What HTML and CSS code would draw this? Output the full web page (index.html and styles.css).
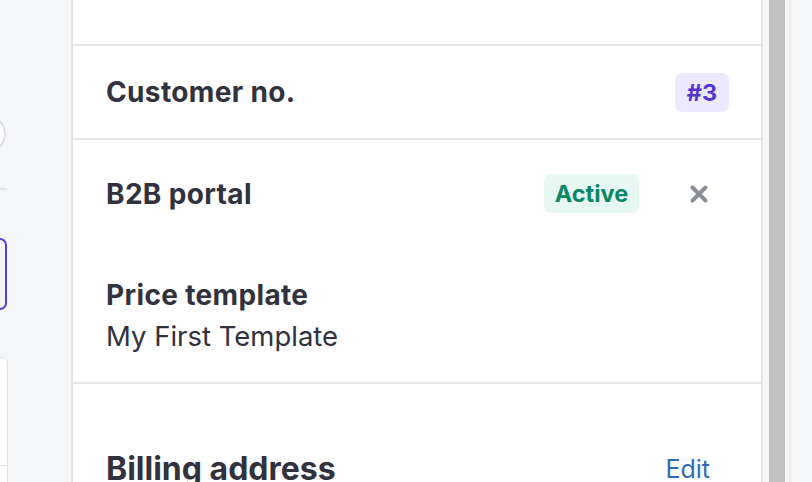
FILE: index.html
```html
<!DOCTYPE html>
<html>
<head>
<meta charset="utf-8">
<link rel="stylesheet" href="styles.css">
</head>
<body>
<div class="page">
  <aside class="side">
    <div class="side-circle"></div>
    <div class="side-line"></div>
    <div class="side-select"></div>
    <div class="side-card"><div class="side-card-line"></div></div>
  </aside>
  <main class="panel">
    <div class="sec sec-top"></div>
    <div class="sec row row-customer">
      <span class="label">Customer no.</span>
      <span class="badge badge-purple">#3</span>
    </div>
    <div class="sec sec-b2b">
      <div class="row row-b2b">
        <span class="label">B2B portal</span>
        <div class="row-end">
          <span class="badge badge-green">Active</span>
          <button class="close" aria-label="Remove">
            <svg width="20" height="20" viewBox="0 0 20 20"><path d="M3.5 3.5L16.5 16.5M16.5 3.5L3.5 16.5" stroke="#8b8d98" stroke-width="4" stroke-linecap="round"/></svg>
          </button>
        </div>
      </div>
      <div class="field">
        <div class="label">Price template</div>
        <div class="value">My First Template</div>
      </div>
    </div>
    <div class="sec sec-billing">
      <div class="row">
        <span class="heading">Billing address</span>
        <a class="link">Edit</a>
      </div>
    </div>
  </main>
  <div class="gutter">
    <div class="thumb"></div>
  </div>
  <div class="rest"></div>
</div>
</body>
</html>
```

FILE: styles.css
```css
* { box-sizing: border-box; }
html, body { margin: 0; padding: 0; }
body {
  font-family: Inter, "Noto Sans", sans-serif;
  color: #32323f;
  background: #f5f6f8;
  width: 812px;
  height: 482px;
  overflow: hidden;
}
.page { display: flex; height: 482px; }
.side {
  width: 71px;
  flex: none;
  background: #f5f6f8;
  position: relative;
  overflow: hidden;
}
.side-circle {
  position: absolute;
  left: -40px; top: 113px;
  width: 46px; height: 42px;
  border: 2px solid #dcdee4;
  border-radius: 50%;
  background: #fff;
}
.side-line {
  position: absolute;
  left: 0; top: 188px;
  width: 7px; height: 2px;
  background: #e2e4e9;
}
.side-select {
  position: absolute;
  left: -20px; top: 238px;
  width: 27px; height: 72px;
  border: 2px solid #5a3fd6;
  border-radius: 7px;
}
.side-card {
  position: absolute;
  left: -20px; top: 357px;
  width: 28px; height: 200px;
  border: 1px solid #e0e2e6;
  border-radius: 6px;
  background: #fff;
}
.side-card-line {
  position: absolute;
  left: 0; right: 0; top: 107px;
  height: 1px;
  background: #dfe1e6;
}
.panel {
  width: 692px;
  flex: none;
  background: #fff;
  border-left: 2px solid #e1e2e6;
  border-right: 2px solid #e4e4e6;
}
.sec { border-bottom: 2px solid #e6e6e8; }
.sec-top { height: 46px; }
.row {
  display: flex;
  align-items: center;
  justify-content: space-between;
  padding: 0 32px 0 33px;
}
.row-customer { height: 94px; }
.label {
  font-size: 28px;
  font-weight: 700;
  line-height: 34px;
  letter-spacing: 0.35px;
}
.value {
  font-size: 27.5px;
  line-height: 34px;
  font-weight: 400;
}
.badge {
  display: inline-flex;
  align-items: center;
  justify-content: center;
  height: 39px;
  border-radius: 7px;
  font-size: 23.5px;
  font-weight: 700;
  padding: 0;
}
.badge-purple { background: #ece8fe; color: #5236d1; width: 54px; }
.badge-green { background: #e7f7f2; color: #0b8768; width: 95px; }
.sec-b2b { height: 244px; }
.row-b2b { height: 107px; padding-right: 0; }
.row-end { display: flex; align-items: center; }
.close {
  width: 122px;
  height: 40px;
  border: 0;
  background: transparent;
  padding: 0 0 0 50px;
  display: flex;
  align-items: center;
  justify-content: flex-start;
}
.field { padding: 31px 33px 0; }
.field .label { display: block; margin-bottom: 7px; }
.sec-billing { border-bottom: 0; padding-top: 65px; }
.heading {
  font-size: 32px;
  font-weight: 700;
  line-height: 40px;
}
.link {
  font-size: 25px;
  color: #2f6cb6;
  margin-right: 19px;
}
.gutter {
  width: 28px;
  flex: none;
  background: #f7f7f8;
  border-right: 2px solid #ececee;
  padding: 0 5px 0 6px;
}
.thumb { width: 16px; height: 482px; background: #c1c1c1; }
.rest { flex: 1; background: #f5f6f8; }
```
